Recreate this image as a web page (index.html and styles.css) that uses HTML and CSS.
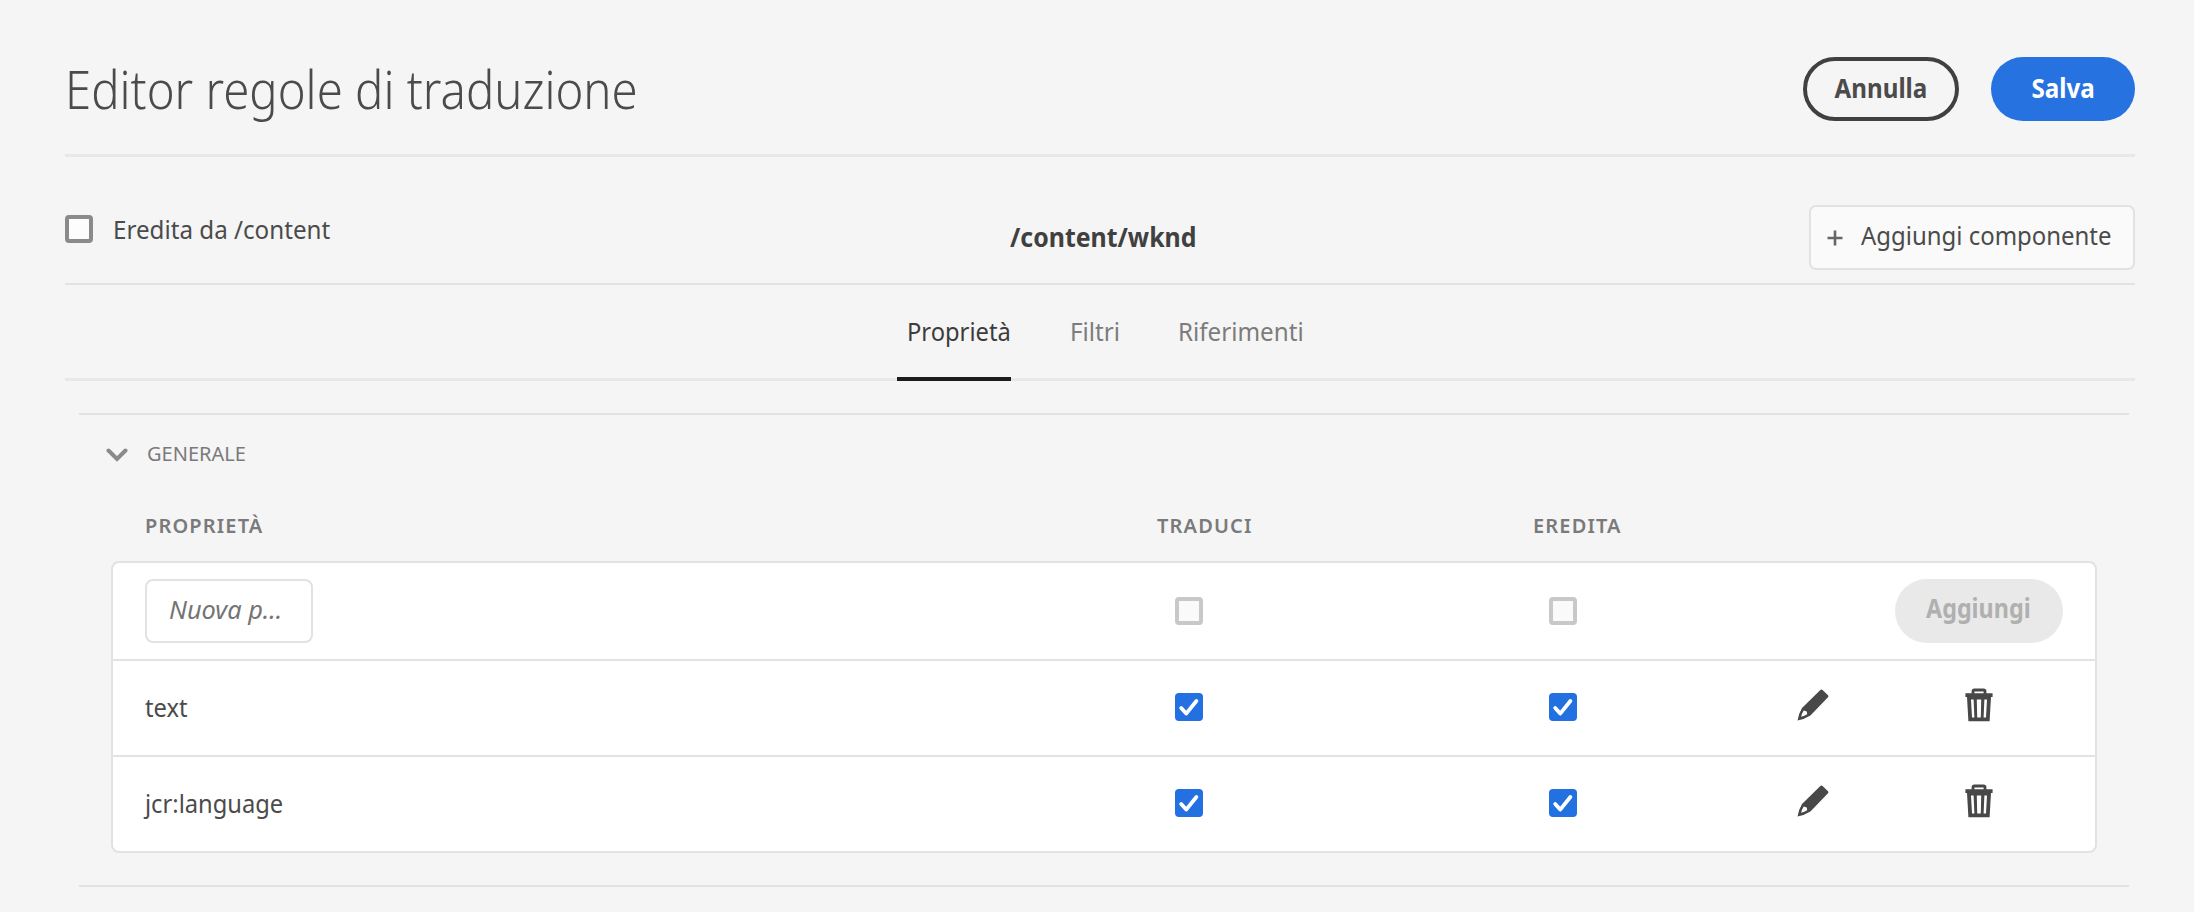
FILE: index.html
```html
<!DOCTYPE html>
<html lang="it">
<head>
<meta charset="utf-8">
<title>Editor regole di traduzione</title>
<link rel="stylesheet" href="styles.css">
</head>
<body>
<svg class="sprite" aria-hidden="true">
  <symbol id="pencil" viewBox="0 0 32 32"><path fill-rule="evenodd" d="M23.6.8Q24.6 0 25.6.9L31 6.3Q31.9 7.3 31 8.3L13.4 26.6Q8 30.2.6 31.4 1.6 24.4 5 18.9ZM6.8 21.6Q4.7 24.6 4.2 27.8 7.4 27 10.2 25.2L9.8 22.4Z"/></symbol>
  <symbol id="trash" viewBox="0 0 28 34"><path fill-rule="evenodd" d="M9.4.6H18.6Q21.4.6 21.4 3.2V5.2H27.6V9H26L24.6 33.2H3.4L2 9H.4V5.2H6.6V3.2Q6.6.6 9.4.6ZM9.4 3.4V5.2H18.6V3.4ZM6 11.6 7 29.6H9.4L8.6 11.6ZM11.8 11.6 12.2 29.6H15.8L16.2 11.6ZM19.4 11.6 18.6 29.6H21L22 11.6Z"/></symbol>
  <symbol id="check" viewBox="0 0 28 28"><path d="M6.2 15 11.2 20.6 21.4 8" fill="none" stroke="#fff" stroke-width="3.8" stroke-linecap="round" stroke-linejoin="round"/></symbol>
</svg>
<main class="page">
  <header class="header">
    <h1 class="title"><span class="narrow t-title">Editor regole di traduzione</span></h1>
    <div class="actions">
      <button class="btn btn-outline"><span class="narrow centered">Annulla</span></button>
      <button class="btn btn-primary"><span class="narrow centered">Salva</span></button>
    </div>
  </header>
  <section class="context">
    <label class="inherit"><span class="box"></span><span class="narrow">Eredita da /content</span></label>
    <strong class="path"><span class="narrow t-path">/content/wknd</span></strong>
    <button class="add-component">
      <svg class="plus" viewBox="0 0 16 16"><path d="M8 .5v15M.5 8h15" stroke="#666" stroke-width="2.6"/></svg>
      <span class="narrow t-comp">Aggiungi componente</span>
    </button>
  </section>
  <nav class="tabs">
    <a class="tab active"><span class="narrow t-name">Proprietà</span></a>
    <a class="tab"><span class="narrow">Filtri</span></a>
    <a class="tab"><span class="narrow">Riferimenti</span></a>
  </nav>
  <section class="accordion">
    <h2 class="group"><svg class="chevron" viewBox="0 0 22 14"><path d="M2.5 2.5 11 11 19.5 2.5" fill="none" stroke="#8a8a8a" stroke-width="4" stroke-linecap="round"/></svg><span class="group-name">GENERALE</span></h2>
    <div class="row head"><span>PROPRIETÀ</span><span>TRADUCI</span><span>EREDITA</span></div>
    <div class="table">
      <div class="row first">
        <div class="cell"><div class="field"><span class="narrow t-hint">Nuova p...</span></div></div>
        <div class="cell"><span class="box disabled"></span></div>
        <div class="cell"><span class="box disabled"></span></div>
        <div class="cell c-add"><button class="btn btn-disabled"><span class="narrow centered t-add">Aggiungi</span></button></div>
      </div>
      <div class="row">
        <div class="cell"><span class="narrow t-name">text</span></div>
        <div class="cell"><svg class="box checked"><use href="#check"/></svg></div>
        <div class="cell"><svg class="box checked"><use href="#check"/></svg></div>
        <div class="cell"><svg class="pencil"><use href="#pencil"/></svg></div>
        <div class="cell"><svg class="trash"><use href="#trash"/></svg></div>
      </div>
      <div class="row">
        <div class="cell"><span class="narrow t-name">jcr:language</span></div>
        <div class="cell"><svg class="box checked"><use href="#check"/></svg></div>
        <div class="cell"><svg class="box checked"><use href="#check"/></svg></div>
        <div class="cell"><svg class="pencil"><use href="#pencil"/></svg></div>
        <div class="cell"><svg class="trash"><use href="#trash"/></svg></div>
      </div>
    </div>
  </section>
</main>
</body>
</html>
```

FILE: styles.css
```css
* { box-sizing: border-box; }
body { margin: 0; background: #f5f5f5; color: #4b4b4b; font: 26px/32px "Noto Sans", "Open Sans", sans-serif; }
h1, h2 { margin: 0; font-weight: 400; }
button { font: inherit; color: inherit; margin: 0; padding: 0; }
span { white-space: nowrap; }
.narrow { display: inline-block; transform: scaleX(.93); transform-origin: left center; }
.centered { transform-origin: center; }
.t-title { transform: scaleX(.893); }
.t-path { transform: scaleX(.957); }
.t-comp { transform: scaleX(.921); }
.t-name { transform: scaleX(.912); }
.t-hint { transform: scaleX(.975); }
.t-add { transform: scaleX(.897); }
.sprite { display: none; }
.page { width: 2194px; height: 912px; padding: 0 59px 0 65px; overflow: hidden; }
.header { height: 157px; border-bottom: 3px solid #e8e8e8; display: flex; justify-content: space-between; padding-top: 56px; }
.title { font-size: 53px; line-height: 66px; font-weight: 300; }
.actions { display: flex; gap: 32px; padding-top: 1px; }
.btn { height: 64px; border: 0; border-radius: 32px; font-weight: 700; padding-bottom: 2px; }
.btn-outline { width: 156px; border: 4px solid #404040; background: none; padding-bottom: 3px; }
.btn-primary { width: 144px; background: #2672e0; color: #fff; padding-bottom: 3px; }
.btn-disabled { display: block; width: 168px; background: #e9e9e9; color: #b0b0b0; padding: 0 2px 7px 0; }
.context { height: 128px; border-bottom: 2px solid #e2e2e2; display: grid; grid-template-columns: 945px 1fr 326px; padding-top: 48px; }
.inherit { display: flex; gap: 20px; height: 28px; margin-top: 10px; align-items: center; }
.box { display: block; flex: none; width: 28px; height: 28px; border: 4px solid #8a8a8a; border-radius: 4px; background: #fdfdfd; }
.disabled { border-color: #c8c8c8; background: #fafafa; }
.checked { border: 0; background: #2371e1; }
.path { line-height: 65px; font-weight: 700; color: #404040; }
.add-component { height: 65px; border: 2px solid #e2e2e2; border-radius: 7px; background: #fafafa; display: flex; align-items: center; gap: 18px; padding-left: 16px; }
.add-component .t-comp { padding-bottom: 6px; }
.plus { flex: none; width: 16px; height: 16px; }
.tabs { height: 96px; border-bottom: 3px solid #e8e8e8; display: flex; padding-left: 832px; color: #7c7c7c; }
.tab { padding: 30px 0 0 10px; height: 96px; }
.active { width: 114px; border-bottom: 4px solid #1c1c1c; color: #3c3c3c; margin-right: 49px; }
.tab:nth-child(2) { width: 108px; }
.accordion { margin: 32px 6px 0 14px; height: 474px; border: solid #e2e2e2; border-width: 2px 0; padding: 24px 32px 0; }
.group { display: flex; align-items: center; gap: 18px; height: 32px; margin-left: -5px; font-size: 20px; color: #7a7a7a; }
.chevron { width: 22px; height: 14px; }
.group-name { padding: 0 0 3px 1px; }
.row { display: grid; grid-template-columns: 1030px 374px 248px 168px 1fr; height: 96px; align-items: center; padding-left: 32px; }
.head { height: 90px; grid-template-columns: 1012px 376px 1fr; padding: 20px 0 0 34px; font-size: 20px; font-weight: 600; letter-spacing: 1.15px; color: #7a7a7a; }
.table { border: 2px solid #e2e2e2; border-radius: 8px; background: #fff; height: 292px; }
.table .row + .row { border-top: 2px solid #e2e2e2; padding-bottom: 2px; }
.field { width: 168px; height: 64px; border: 2px solid #e2e2e2; border-radius: 8px; padding: 12px 22px; font-style: italic; color: #747474; }
.c-add { grid-column: 4 / 6; padding-left: 98px; }
.pencil, .trash { display: block; fill: #484848; margin-bottom: 4px; }
.pencil { width: 32px; height: 32px; }
.trash { width: 28px; height: 34px; }
```
